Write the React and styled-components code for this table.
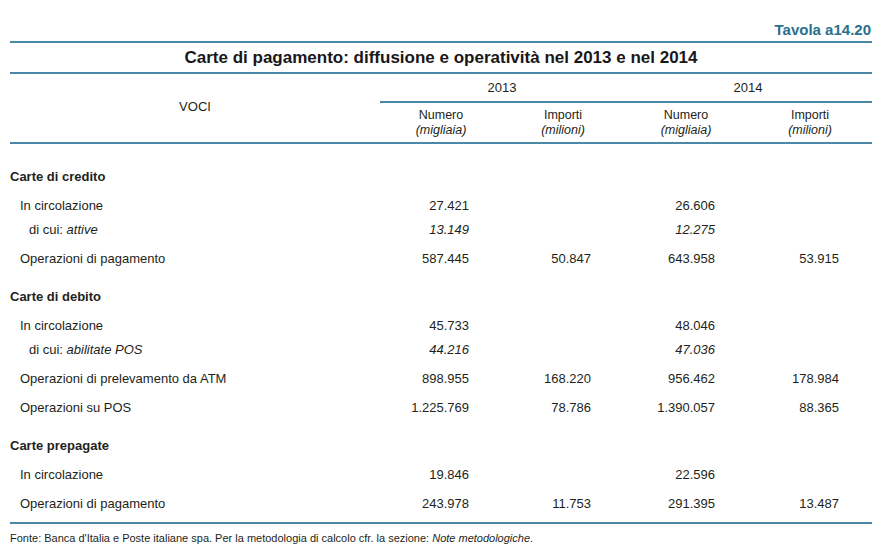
import React from "react";
import styled, { createGlobalStyle } from "styled-components";

const GlobalStyle = createGlobalStyle`
  body {
    margin: 0;
    background: #ffffff;
    font-family: "Liberation Sans", Arial, sans-serif;
    color: #231f20;
  }
`;

const rows = [
  { kind: "section", label: "Carte di credito" },
  { kind: "item", label: "In circolazione", values: ["27.421", "", "26.606", ""] },
  { kind: "sub", label: "di cui: ", em: "attive", values: ["13.149", "", "12.275", ""] },
  { kind: "item", label: "Operazioni di pagamento", values: ["587.445", "50.847", "643.958", "53.915"] },
  { kind: "section", label: "Carte di debito" },
  { kind: "item", label: "In circolazione", values: ["45.733", "", "48.046", ""] },
  { kind: "sub", label: "di cui: ", em: "abilitate POS", values: ["44.216", "", "47.036", ""] },
  { kind: "item", label: "Operazioni di prelevamento da ATM", values: ["898.955", "168.220", "956.462", "178.984"] },
  { kind: "item", label: "Operazioni su POS", values: ["1.225.769", "78.786", "1.390.057", "88.365"] },
  { kind: "section", label: "Carte prepagate" },
  { kind: "item", label: "In circolazione", values: ["19.846", "", "22.596", ""] },
  { kind: "item", label: "Operazioni di pagamento", values: ["243.978", "11.753", "291.395", "13.487"] },
];

const App = () => {
  return (
    <Page>
      <GlobalStyle />
      <TavolaBar>Tavola a14.20</TavolaBar>
      <Title>Carte di pagamento: diffusione e operatività nel 2013 e nel 2014</Title>
      <Frame>
        <Table>
          <colgroup>
            <col style={{ width: 370 }} />
            <col style={{ width: 122 }} />
            <col style={{ width: 122 }} />
            <col style={{ width: 124 }} />
            <col style={{ width: 124 }} />
          </colgroup>
          <thead>
            <tr>
              <VociCell rowSpan={2}>VOCI</VociCell>
              <YearCell colSpan={2}>2013</YearCell>
              <YearCell colSpan={2}>2014</YearCell>
            </tr>
            <tr>
              <SubHead>
                <span>Numero</span>
                <em>(migliaia)</em>
              </SubHead>
              <SubHead>
                <span>Importi</span>
                <em>(milioni)</em>
              </SubHead>
              <SubHead>
                <span>Numero</span>
                <em>(migliaia)</em>
              </SubHead>
              <SubHead>
                <span>Importi</span>
                <em>(milioni)</em>
              </SubHead>
            </tr>
          </thead>
          <tbody>
            {rows.map((r, i) =>
              r.kind === "section" ? (
                <SectionRow key={i}>
                  <SectionCell colSpan={5}>{r.label}</SectionCell>
                </SectionRow>
              ) : (
                <DataRow key={i} $kind={r.kind}>
                  <LabelCell $kind={r.kind}>
                    {r.label}
                    {r.em && <em>{r.em}</em>}
                  </LabelCell>
                  {r.values.map((v, j) => (
                    <NumCell key={j} $italic={r.kind === "sub"}>
                      {v}
                    </NumCell>
                  ))}
                </DataRow>
              )
            )}
          </tbody>
        </Table>
      </Frame>
      <Footnote>
        Fonte: Banca d'Italia e Poste italiane spa. Per la metodologia di calcolo cfr. la sezione:{" "}
        <em>Note metodologiche</em>.
      </Footnote>
    </Page>
  );
};

export default App;

const ruleColor = "#4a88a5";

const Page = styled.div`
  width: 862px;
  padding-left: 10px;
`;

const TavolaBar = styled.div`
  height: 41px;
  box-sizing: border-box;
  padding-top: 22px;
  padding-right: 1px;
  text-align: right;
  font-size: 15px;
  line-height: 16px;
  font-weight: bold;
  color: #2b6f90;
`;

const Title = styled.div`
  height: 29px;
  border-top: 2px solid ${ruleColor};
  display: flex;
  align-items: center;
  justify-content: center;
  font-size: 17px;
  font-weight: bold;
  color: #1a1718;
`;

const Frame = styled.div`
  border-top: 2px solid ${ruleColor};
  border-bottom: 2px solid ${ruleColor};
  padding-bottom: 10px;
`;

const Table = styled.table`
  width: 862px;
  border-collapse: separate;
  border-spacing: 0;
  table-layout: fixed;
  font-size: 13px;

  em {
    font-style: italic;
  }
`;

const VociCell = styled.th`
  font-weight: normal;
  text-align: center;
  vertical-align: middle;
  padding: 0 0 4px 0;
  border-bottom: 2px solid ${ruleColor};
`;

const YearCell = styled.th`
  height: 27px;
  padding: 0;
  font-weight: normal;
  text-align: center;
  vertical-align: middle;
  border-bottom: 2px solid ${ruleColor};
`;

const SubHead = styled.th`
  height: 39px;
  padding: 0;
  font-weight: normal;
  font-size: 12.5px;
  text-align: center;
  vertical-align: middle;
  line-height: 14.5px;
  border-bottom: 2px solid ${ruleColor};

  span,
  em {
    display: block;
  }
`;

const SectionRow = styled.tr`
  height: 38px;

  &:first-child {
    height: 41px;
  }
`;

const SectionCell = styled.td`
  padding: 0;
  vertical-align: bottom;
  line-height: 16px;
  font-weight: bold;
`;

const DataRow = styled.tr`
  height: ${(p) => (p.$kind === "sub" ? 24 : 29)}px;
`;

const LabelCell = styled.td`
  padding: 0 0 0 ${(p) => (p.$kind === "sub" ? 19 : 10)}px;
  vertical-align: bottom;
  line-height: 16px;
  white-space: nowrap;
`;

const NumCell = styled.td`
  padding: 0 33px 0 0;
  vertical-align: bottom;
  line-height: 16px;
  text-align: right;
  font-style: ${(p) => (p.$italic ? "italic" : "normal")};
`;

const Footnote = styled.div`
  padding-top: 8px;
  font-size: 11px;
  line-height: 12px;
`;
